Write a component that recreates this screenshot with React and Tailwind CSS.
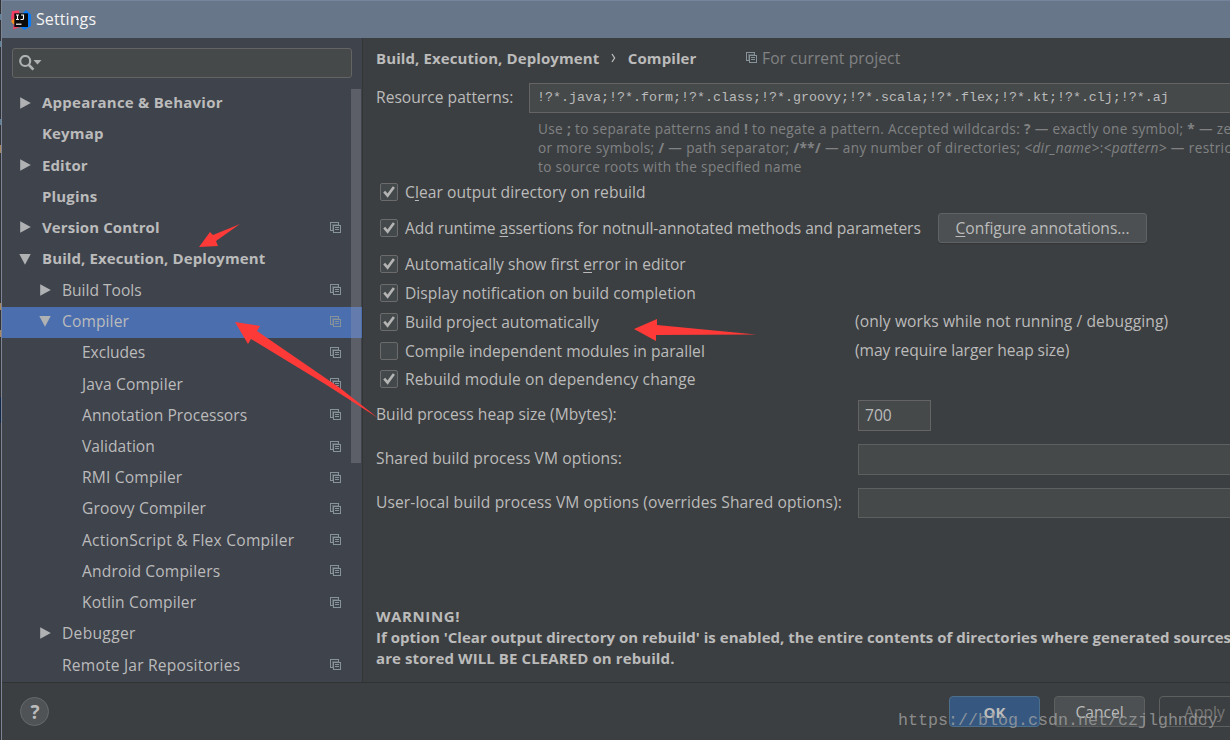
import React from "react";

const TREE = [
  { label: "Appearance & Behavior", level: 0, arrow: "right", tracking: "tracking-[0.24px]" },
  { label: "Keymap", level: 0, tracking: "tracking-[0.15px]" },
  { label: "Editor", level: 0, arrow: "right", tracking: "tracking-[0.1px]" },
  { label: "Plugins", level: 0, tracking: "tracking-[0.15px]" },
  { label: "Version Control", level: 0, arrow: "right", copy: true, tracking: "tracking-[0.08px]" },
  { label: "Build, Execution, Deployment", level: 0, arrow: "down", tracking: "tracking-[0.1px]" },
  { label: "Build Tools", level: 1, arrow: "right", copy: true, tracking: "tracking-[-0.02px]" },
  { label: "Compiler", level: 1, arrow: "down", copy: true, selected: true, tracking: "tracking-[0.1px]" },
  { label: "Excludes", level: 2, copy: true, tracking: "tracking-[-0.05px]" },
  { label: "Java Compiler", level: 2, copy: true, tracking: "tracking-[0.12px]" },
  { label: "Annotation Processors", level: 2, copy: true, tracking: "tracking-[0.03px]" },
  { label: "Validation", level: 2, copy: true, tracking: "tracking-[0.04px]" },
  { label: "RMI Compiler", level: 2, copy: true, tracking: "tracking-[0.18px]" },
  { label: "Groovy Compiler", level: 2, copy: true, tracking: "tracking-[0.12px]" },
  { label: "ActionScript & Flex Compiler", level: 2, copy: true, tracking: "tracking-[0.23px]" },
  { label: "Android Compilers", level: 2, copy: true, tracking: "tracking-[0.14px]" },
  { label: "Kotlin Compiler", level: 2, copy: true, tracking: "tracking-[0.14px]" },
  { label: "Debugger", level: 1, arrow: "right", tracking: "tracking-[0.3px]" },
  { label: "Remote Jar Repositories", level: 1, copy: true, tracking: "tracking-[0.19px]" },
];

const INDENT = ["pl-[17px]", "pl-[37px]", "pl-[57px]"];

function CopyIcon() {
  return (
    <svg className="h-[11px] w-[11px] shrink-0" viewBox="0 0 11 11" fill="none" stroke="#87939a" shapeRendering="crispEdges">
      <path d="M2.5 8.5H0.5V0.5H8.5V2.5" />
      <rect x="3.5" y="3.5" width="7" height="7" />
      <path d="M5 5.5H9M5 7.5H9" />
      <path d="M2.5 8.5V2.5H8.5" strokeOpacity="0.45" />
    </svg>
  );
}

function TreeArrow({ dir }) {
  return (
    <svg className="h-3 w-3 shrink-0" viewBox="0 0 12 12" fill="#afb1b3">
      {dir === "right" && <path d="M1.2 0.2L11.8 6L1.2 11.8Z" />}
      {dir === "down" && <path d="M0.3 1H11.7L6 11.7Z" />}
    </svg>
  );
}

function TreeRow({ item }) {
  return (
    <div className={`flex h-[31.22px] items-center pr-[21px] pb-[2px] ${INDENT[item.level]} ${item.selected ? "bg-[#4b6eaf]" : ""}`}>
      <TreeArrow dir={item.arrow} />
      <span className={`ml-[11px] flex-1 whitespace-nowrap ${item.tracking} ${item.level === 0 ? "pb-[1px] text-[15px] font-bold" : ""}`}>
        {item.label}
      </span>
      {item.copy && <CopyIcon />}
    </div>
  );
}

function Checkbox({ checked }) {
  return (
    <span className="mr-[7.5px] ml-[3.5px] flex h-[18px] w-[18px] shrink-0 items-center justify-center rounded-[2px] border border-[#6b6b6b] bg-[#43494a]">
      {checked && (
        <svg className="h-[12px] w-[12px]" viewBox="0 0 12 12" fill="none" stroke="#b4b4b4" strokeWidth="2.6">
          <path d="M1.2 5.6L4.6 9.6L10.9 1" />
        </svg>
      )}
    </span>
  );
}

function Option({ checked = true, note, tracking, noteTracking, children }) {
  return (
    <div className="flex h-[28.8px] items-center">
      <div className="flex w-[479px] items-center whitespace-nowrap">
        <Checkbox checked={checked} />
        <span className={tracking}>{children}</span>
      </div>
      {note && <span className={`pb-[1px] whitespace-nowrap ${noteTracking}`}>{note}</span>}
    </div>
  );
}

function Field({ label, tracking, children }) {
  return (
    <div className="mb-[13px] flex h-[31px] items-center">
      <span className={`w-[482px] shrink-0 pb-[2px] whitespace-nowrap ${tracking}`}>{label}</span>
      {children}
    </div>
  );
}

function Mnemonic({ children }) {
  return <span className="underline underline-offset-2">{children}</span>;
}

export default function App() {
  return (
    <div className="relative flex h-[740px] w-[1230px] overflow-hidden bg-[#3c3f41] font-['Open_Sans','Noto_Sans',sans-serif] text-[15.6px] leading-[20px] text-[#bbbbbb]">
      <div className="flex w-[2px] shrink-0 flex-col border-r border-[#7c8496] bg-[#2f3335]">
        <div className="mt-[14px] h-[6px] bg-[#5c8199]" />
        <div className="mt-[21px] h-[6px] bg-[#5c8199]" />
        <div className="mt-[72px] h-[6px] bg-[#5c8199]" />
        <div className="mt-[20px] h-[8px] bg-[#a9865e]" />
        <div className="mt-[150px] h-[7px] bg-[#a9865e]" />
        <div className="mt-[20px] h-[7px] bg-[#a9865e]" />
        <div className="mt-[60px] h-[26px] bg-[#12294a]" />
      </div>
      <div className="flex min-w-0 flex-1 flex-col">
        <header className="flex h-[38px] shrink-0 items-center border-t border-[#75849a] bg-[#687689] pl-[9px] text-[#f4f4f4]">
          <svg className="h-5 w-5" viewBox="0 0 20 20">
            <path d="M1 1L8 0.5L10 10L9 17L2 19.5L3 12L0 9Z" fill="#f33f63" />
            <path d="M0 11L5 7V14L2 14Z" fill="#f68b1f" />
            <path d="M12 3L15 0L20 4.5V16L13 20L10 17Z" fill="#087cfa" />
            <rect x="3.3" y="3.3" width="13.7" height="13.7" fill="#0b0b0b" />
            <path d="M5 5H8M6.5 5V9.5M5 9.5H8M10 5H12.5V8.5Q12.5 9.5 11.2 9.5H9.5" stroke="#fff" strokeWidth="1.1" fill="none" />
            <path d="M5 14.2H10.5" stroke="#fff" strokeWidth="1.2" />
          </svg>
          <span className="ml-[5px] pb-[1px] text-[16px] tracking-[0.1px]">Settings</span>
        </header>

        <div className="flex h-[645px] shrink-0 overflow-hidden border-b border-[#303234]">
          <aside className="relative flex w-[361px] shrink-0 flex-col border-r border-[#333536] bg-[#3f434c]">
            <div className="mt-[10px] ml-[10px] flex h-[30px] w-[340px] shrink-0 items-center rounded-[3px] border border-[#646464] bg-[#45494a] pb-[1px] pl-[6px]">
              <svg className="h-4 w-[23px]" viewBox="0 0 23 16" fill="none">
                <circle cx="6.2" cy="6" r="5" stroke="#afb1b3" strokeWidth="2.2" />
                <path d="M9.6 9.6L14.4 14.6" stroke="#afb1b3" strokeWidth="2.8" />
                <path d="M14.5 5H22.5L18.5 9.4Z" fill="#afb1b3" />
              </svg>
            </div>
            <nav className="mt-[10px] flex flex-col">
              {TREE.map((item) => (
                <TreeRow key={item.label} item={item} />
              ))}
            </nav>
            <div className="absolute top-[51px] right-[1px] h-[374px] w-[10px] bg-[#a0a0aa]/30" />
          </aside>

          <main className="flex w-[1000px] shrink-0 flex-col pl-[13px]">
            <div className="flex h-[41px] items-center pb-[2px] whitespace-nowrap">
              <span className="text-[15px] font-bold tracking-[0.1px]">Build, Execution, Deployment</span>
              <svg className="ml-[12px] h-[10px] w-[5px]" viewBox="0 0 5 10" fill="none" stroke="#bbbbbb" strokeWidth="1.3">
                <path d="M1 1L3.6 5L1 9" />
              </svg>
              <span className="ml-[11.5px] text-[15px] font-bold tracking-[0.1px]">Compiler</span>
              <span className="ml-[49.5px] flex items-center gap-[5px] tracking-[0.09px] text-[#808284]">
                <CopyIcon />
                For current project
              </span>
            </div>

            <div className="mt-[4px] flex h-[30px] items-center">
              <span className="w-[153px] shrink-0 pb-[2px] tracking-[0.02px] whitespace-nowrap">Resource patterns:</span>
              <div className="flex h-full w-[760px] items-center border border-[#646464] bg-[#45494a] pl-[7px] font-['Liberation_Mono',monospace] text-[13.33px] whitespace-pre">
                !?*.java;!?*.form;!?*.class;!?*.groovy;!?*.scala;!?*.flex;!?*.kt;!?*.clj;!?*.aj
              </div>
            </div>

            <div className="mt-[6px] h-[57px] pl-[162px] text-[13.6px] leading-[19px] whitespace-nowrap text-[#808284]">
              <div className="tracking-[0.34px]">
                Use <b>;</b> to separate patterns and <b>!</b> to negate a pattern. Accepted wildcards: <b>?</b> — exactly one symbol; <b>*</b> — zero
              </div>
              <div className="tracking-[0.37px]">
                or more symbols; <b>/</b> — path separator; <b>/**/</b> — any number of directories; <i>&lt;dir_name&gt;</i>:<i>&lt;pattern&gt;</i> — restrict
              </div>
              <div className="tracking-[0.34px]">to source roots with the specified name</div>
            </div>

            <div className="mt-[2px] flex flex-col">
              <Option tracking="tracking-[0.06px]">
                C<Mnemonic>l</Mnemonic>ear output directory on rebuild
              </Option>
              <div className="mt-[6px] mb-[7px] flex h-[30px] items-center whitespace-nowrap">
                <Checkbox checked />
                <span className="w-[533px] tracking-[-0.06px]">
                  Add runtime <Mnemonic>a</Mnemonic>ssertions for notnull-annotated methods and parameters
                </span>
                <button className="h-[30px] w-[209px] rounded-[3px] border border-[#5e6365] bg-[#4c5052] tracking-[-0.03px] shadow-[0_1px_1px_#323536]">
                  <Mnemonic>C</Mnemonic>onfigure annotations...
                </button>
              </div>
              <Option tracking="tracking-[0.01px]">
                Automatically show first <Mnemonic>e</Mnemonic>rror in editor
              </Option>
              <Option tracking="tracking-[0.06px]">Display notification on build completion</Option>
              <Option tracking="tracking-[0px]" note="(only works while not running / debugging)" noteTracking="tracking-[0.09px]">
                Build project automatically
              </Option>
              <Option checked={false} tracking="tracking-[0.01px]" note="(may require larger heap size)" noteTracking="tracking-[-0.06px]">
                Compile independent modules in parallel
              </Option>
              <Option tracking="tracking-[0.09px]">Rebuild module on dependency change</Option>
            </div>

            <div className="mt-[6.2px] flex flex-col">
              <Field label="Build process heap size (Mbytes):" tracking="tracking-[0.02px]">
                <div className="flex h-[31px] w-[73px] items-center border border-[#646464] bg-[#45494a] pb-[1px] pl-[6px]">700</div>
              </Field>
              <Field label="Shared build process VM options:" tracking="tracking-[0.1px]">
                <div className="h-[31px] w-[500px] border border-[#5e6060] bg-[#45494a]" />
              </Field>
              <Field label="User-local build process VM options (overrides Shared options):" tracking="tracking-[0.1px]">
                <div className="h-[30px] w-[500px] border border-[#5e6060] bg-[#45494a]" />
              </Field>
            </div>

            <div className="mt-[74px] text-[15px] leading-[21px] font-bold whitespace-nowrap">
              <div className="tracking-[0.6px]">WARNING!</div>
              <div className="tracking-[0.02px]">If option 'Clear output directory on rebuild' is enabled, the entire contents of directories where generated sources</div>
              <div className="tracking-[0.1px]">are stored WILL BE CLEARED on rebuild.</div>
            </div>
          </main>
        </div>

        <footer className="flex h-[57px] shrink-0 items-center">
          <div className="ml-[18px] flex h-[29px] w-[29px] shrink-0 items-center justify-center rounded-full border border-[#666a6c] bg-[#4f5355] pl-[1px] text-[19px] font-bold">
            ?
          </div>
          <div className="ml-[900px] flex shrink-0 gap-[14px]">
            <button className="h-[31px] w-[91px] rounded-[4px] border border-[#4c708c] bg-[#365880] text-[15px] font-bold">OK</button>
            <button className="h-[31px] w-[91px] rounded-[4px] border border-[#5e6060] bg-[#4c5052]">Cancel</button>
            <button className="h-[31px] w-[91px] rounded-[4px] border border-[#5e6060] text-[#777777]">Apply</button>
          </div>
        </footer>
      </div>

      <svg className="pointer-events-none absolute inset-0 h-[740px] w-[1230px]" viewBox="0 0 1230 740" fill="#fd3a38">
        <path d="M199 247L210 232L213 235L240 224L216 241L218 246Z" />
        <path d="M235 322L260 326L257 331L340 388L378 418L325 384L251 339L248 344Z" />
        <path d="M634 329L657 319V325L756 334.5L656 335V341Z" />
      </svg>
      <div className="pointer-events-none absolute top-[711px] left-[898px] font-['Liberation_Mono',monospace] text-[16.67px] whitespace-pre text-[#a0a0a0]/80">
        https://blog.csdn.net/czjlghndcy
      </div>
    </div>
  );
}
